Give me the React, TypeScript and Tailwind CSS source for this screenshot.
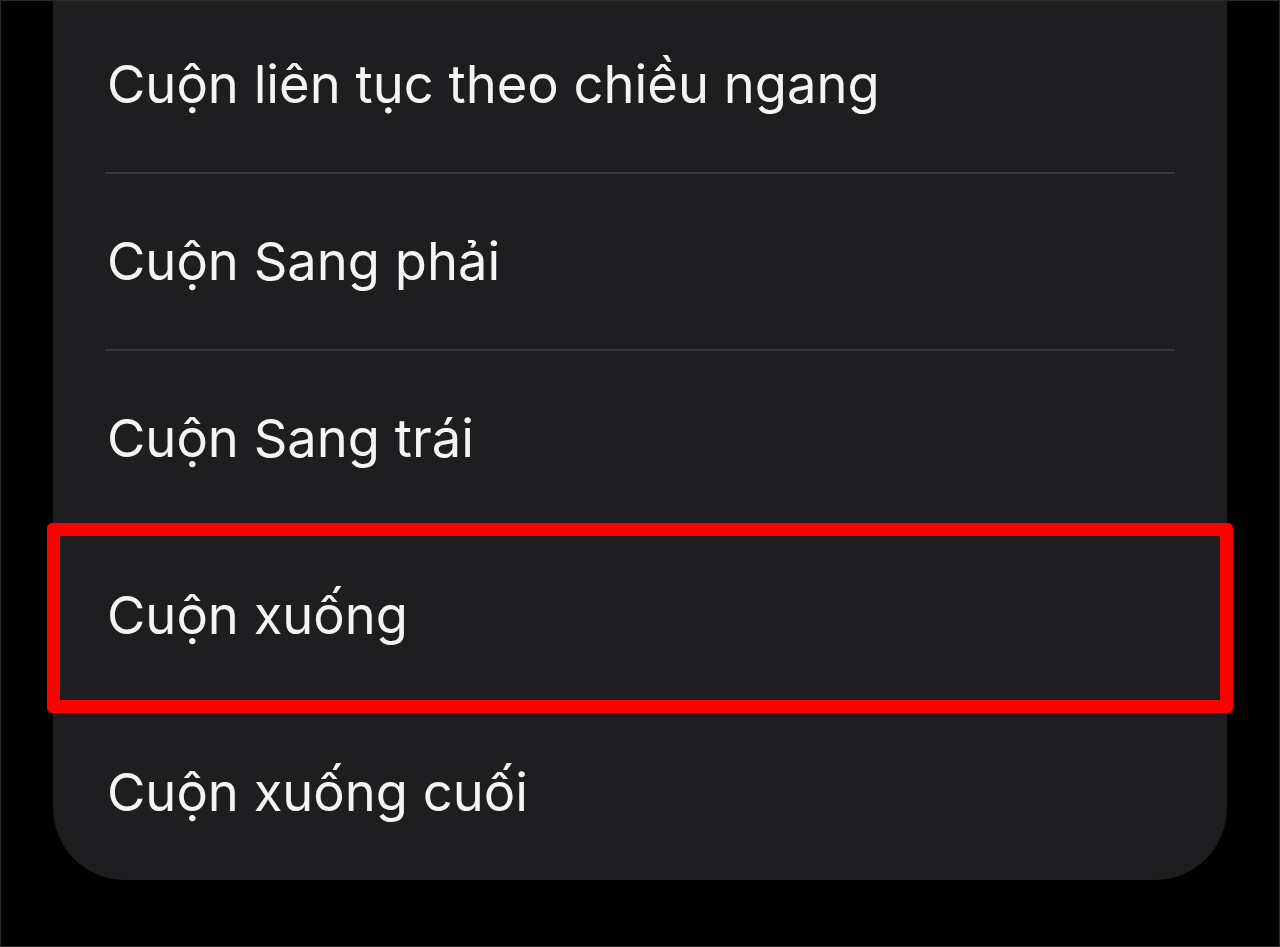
const ITEMS = [
  'Cuộn liên tục theo chiều ngang',
  'Cuộn Sang phải',
  'Cuộn Sang trái',
  'Cuộn xuống',
  'Cuộn xuống cuối',
]

export default function App() {
  return (
    <div className="h-[947px] w-[1280px] overflow-hidden border border-[#2a2a2a] bg-black font-['Inter','Noto_Sans',sans-serif]">
      <div className="relative mx-[52px] -mt-[4px] rounded-b-[72px] bg-[#1e1e20]">
        {ITEMS.map((label, i) => (
          <div key={label}>
            <div className="flex h-[175px] items-center px-[54px] text-[52.5px] leading-none text-[#f4f4f5]">
              {label}
            </div>
            {i < ITEMS.length - 1 && <div className="mx-[52px] h-[2px] bg-[#3a3a3d]" />}
          </div>
        ))}
        <div className="absolute left-[-6px] right-[-6px] top-[526px] h-[190px] rounded-[5px] border-[13px] border-[#ff0000]" />
      </div>
    </div>
  )
}
